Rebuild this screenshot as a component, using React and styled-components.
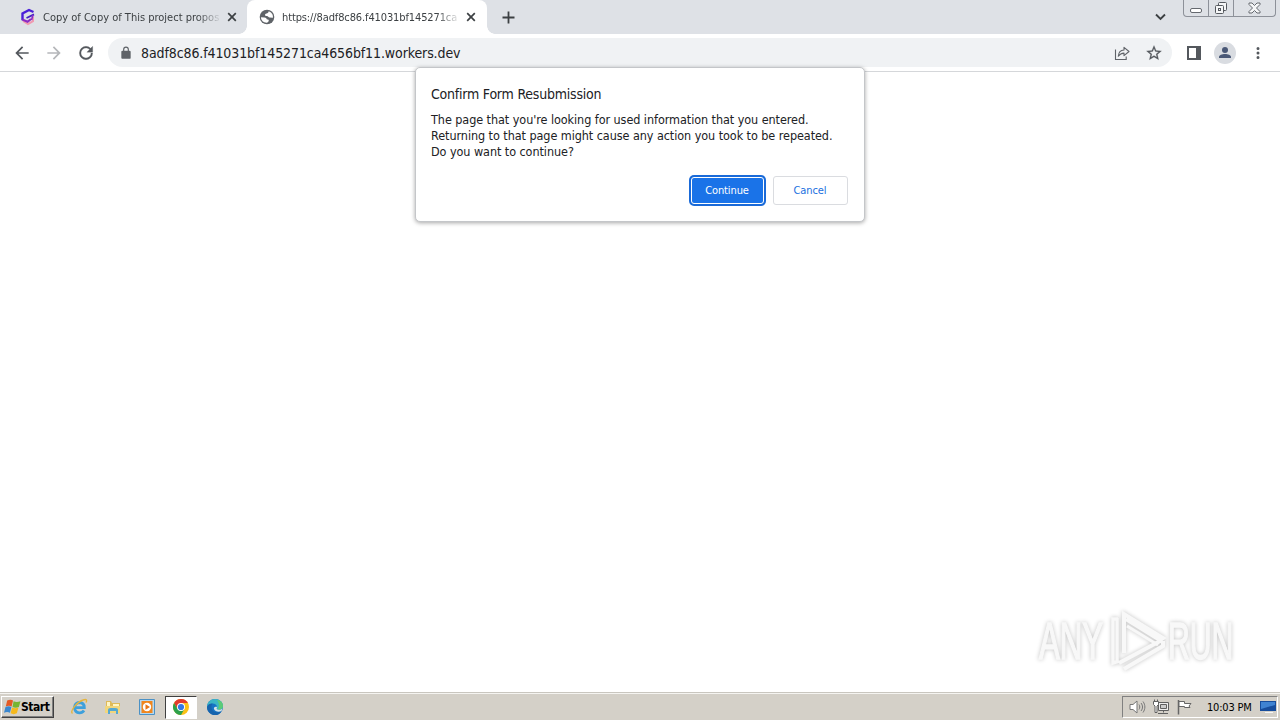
import React from 'react';
import styled, { createGlobalStyle } from 'styled-components';

const GlobalStyle = createGlobalStyle`
  * { box-sizing: border-box; }
  body {
    margin: 0;
    overflow: hidden;
    background: #fff;
    font-family: "DejaVu Sans Condensed", "DejaVu Sans", "Noto Sans", sans-serif;
    font-stretch: condensed;
  }
  svg { display: block; flex: none; }
`;

const Desktop = styled.div`
  position: relative;
  width: 1280px;
  height: 720px;
  display: flex;
  flex-direction: column;
  overflow: hidden;
`;

const TabStrip = styled.div`
  display: flex;
  height: 34px;
  flex: none;
  background: #dee1e6;
`;

const Tab = styled.div`
  position: relative;
  display: flex;
  align-items: center;
  width: ${p => (p.$active ? 240 : 247)}px;
  height: 34px;
  padding: 0 10px 0 ${p => (p.$active ? 12 : 20)}px;
  background: ${p => (p.$active ? '#fff' : 'transparent')};
  border-radius: 8px 8px 0 0;
  color: #3c4043;

  &::before,
  &::after {
    content: '';
    display: ${p => (p.$active ? 'block' : 'none')};
    position: absolute;
    bottom: 0;
    width: 8px;
    height: 8px;
  }
  &::before {
    left: -8px;
    background: radial-gradient(circle at 0 0, transparent 7.5px, #fff 8px);
  }
  &::after {
    right: -8px;
    background: radial-gradient(circle at 100% 0, transparent 7.5px, #fff 8px);
  }
`;

const TabTitle = styled.span`
  width: 176px;
  margin: 1px 8px 0 7px;
  white-space: nowrap;
  font-size: 11px;
  line-height: 16px;
  letter-spacing: ${p => p.$spacing || 0}px;
  mask-image: linear-gradient(to right, #000 154px, transparent 179px);
`;

const NewTab = styled.div`
  display: flex;
  align-items: center;
  padding-left: 15px;
`;

const WindowControls = styled.div`
  display: flex;
  align-items: flex-start;
  margin-left: auto;
`;

const TabSearch = styled.div`
  padding: 13px 17px 0 0;
`;

const ControlGroup = styled.div`
  display: flex;
  height: 17px;
  width: 93px;
  margin-right: 4px;
  border: 1px solid #8d9199;
  border-top: 0;
  border-radius: 0 0 4px 4px;
`;

const ControlButton = styled.div`
  display: flex;
  align-items: center;
  justify-content: center;
  width: ${p => p.$width}px;
  height: 16px;
  border-right: ${p => (p.$last ? '0' : '1px solid #8d9199')};
`;

const Toolbar = styled.div`
  display: flex;
  align-items: center;
  height: 38px;
  flex: none;
  padding-left: 12px;
  background: #fff;
  border-bottom: 1px solid #d5d7da;
`;

const NavButtons = styled.div`
  display: flex;
  gap: 12px;
  width: 96px;
`;

const AddressBar = styled.div`
  display: flex;
  align-items: center;
  width: 1064px;
  height: 29px;
  padding: 0 9px 0 11px;
  border-radius: 15px;
  background: #f0f2f4;
`;

const Url = styled.span`
  flex: 1;
  margin-left: 8px;
  font-size: 14px;
  line-height: 20px;
  letter-spacing: -0.1px;
  color: #202124;
`;

const AddressActions = styled.div`
  display: flex;
  align-items: center;
  gap: 15px;
`;

const ToolbarActions = styled.div`
  display: flex;
  align-items: center;
  gap: 13px;
  margin-left: 15px;
`;

const Avatar = styled.div`
  width: 22px;
  height: 22px;
  border-radius: 50%;
  background: #d9dce1;
`;

const Page = styled.main`
  flex: 1;
  display: flex;
  align-items: flex-end;
  justify-content: flex-end;
  padding: 0 41px 20px 0;
  background: #fff;
`;

const Dialog = styled.div`
  position: absolute;
  left: 415px;
  top: 67px;
  width: 450px;
  height: 155px;
  padding: 17px 16px 16px 15px;
  border: 1px solid #c4c6c9;
  border-radius: 5px;
  background: #fff;
  box-shadow: 0 1px 4px rgba(0, 0, 0, 0.35);
  color: #202124;
`;

const DialogTitle = styled.h1`
  margin: 0 0 9px;
  font-size: 14px;
  font-weight: 400;
  line-height: 18px;
  letter-spacing: -0.22px;
`;

const DialogLine = styled.div`
  font-size: 12.5px;
  line-height: 16px;
  white-space: nowrap;
  letter-spacing: -0.06px;
`;

const DialogActions = styled.div`
  display: flex;
  justify-content: flex-end;
  gap: 9px;
  margin-top: 16px;
`;

const Button = styled.button`
  width: ${p => (p.$primary ? 73 : 75)}px;
  height: ${p => (p.$primary ? 27 : 29)}px;
  margin: ${p => (p.$primary ? '1px' : '0')} 0 0;
  padding: 0 1px 1px 0;
  border: 1px solid ${p => (p.$primary ? '#fff' : '#dadce0')};
  border-radius: 3px;
  background: ${p => (p.$primary ? '#1a73e8' : '#fff')};
  box-shadow: ${p => (p.$primary ? '0 0 0 2px #1a6ad8' : 'none')};
  color: ${p => (p.$primary ? '#fff' : '#1a6fe0')};
  font-family: inherit;
  font-stretch: inherit;
  font-size: 11px;
  letter-spacing: -0.1px;
`;

const Watermark = styled.div`
  display: flex;
  align-items: center;
  filter: drop-shadow(0 0 2px rgba(0, 0, 0, 0.24));
`;

const WatermarkText = styled.span`
  width: ${p => p.$width}px;
  height: 54px;
  font-family: "Liberation Sans", Arial, sans-serif;
  font-stretch: normal;
  font-size: 52px;
  line-height: 54px;
  color: #f8f8f8;
  -webkit-text-stroke: 1.5px #f8f8f8;
  transform: scaleX(${p => p.$scale});
  transform-origin: left;
`;

const Taskbar = styled.footer`
  display: flex;
  align-items: center;
  height: 28px;
  flex: none;
  padding: 1px 2px 0 1px;
  border-top: 1px solid #c9c6bf;
  background: #d4d0c8;
  box-shadow: inset 0 1px #f5f4f1;
`;

const StartButton = styled.div`
  display: flex;
  align-items: center;
  width: 53px;
  height: 22px;
  padding-left: 2px;
  border: 1px solid;
  border-color: #fff #404040 #404040 #fff;
  box-shadow: inset -1px -1px #808080;
  color: #000;
  font-size: 12px;
  font-weight: 700;
  letter-spacing: -0.45px;
`;

const QuickLaunch = styled.div`
  display: flex;
  align-items: center;
  margin-left: 8px;
`;

const TaskItem = styled.div`
  display: flex;
  align-items: center;
  justify-content: center;
  width: ${p => (p.$active ? 32 : 34)}px;
  height: 23px;
  margin: 0 ${p => (p.$active ? 1 : 0)}px;
  border: 1px solid;
  border-color: ${p => (p.$active ? '#404040 #fff #fff #404040' : 'transparent')};
  background: ${p => (p.$active ? '#fff' : 'transparent')};
`;

const Tray = styled.div`
  display: flex;
  align-items: center;
  width: 156px;
  height: 22px;
  margin-left: auto;
  padding: 0 1px 0 6px;
  border: 1px solid;
  border-color: #808080 #fff #fff #808080;
  gap: 7px;
`;

const Clock = styled.span`
  flex: 1;
  margin-left: 7px;
  font-size: 11px;
  letter-spacing: -0.2px;
  white-space: nowrap;
  color: #000;
`;

const CloseIcon = () => (
  <svg width="10" height="10" viewBox="0 0 10 10" stroke="#3c4043" strokeWidth="1.7">
    <path d="M1.200 1.200l7.600 7.600M8.800 1.200L1.200 8.800" />
  </svg>
);

const ProjectIcon = () => (
  <svg width="16" height="18" viewBox="0 0 16 18" fill="none">
    <path d="M13 9v4.200L8 16l-5-3" stroke="#f09ab0" strokeWidth="2" />
    <path d="M13.500 4L9 2 2.500 5.500v6.700" stroke="#4a1fd8" strokeWidth="2.400" />
    <path d="M2.300 11.500l5.300 2.300L11 11" stroke="#8b2bc4" strokeWidth="2.200" />
    <path d="M6.500 10l7.500-3.600" stroke="#4420c4" strokeWidth="1.800" />
    <path d="M13 7l-1.500 5" stroke="#8b2bc4" strokeWidth="1.600" />
  </svg>
);

const GlobeIcon = () => (
  <svg width="16" height="16" viewBox="0 0 16 16">
    <circle cx="8" cy="8" r="7.300" fill="#5f6368" />
    <path d="M2 8.300l3.500.200c1.400.100 2 .700 2.200 1.800l1.900.400c.600 1.200-.300 2.700-1.800 3C4.600 13.800 2 11.500 2 8.300z" fill="#fff" />
    <path d="M9.700 2.300C9.500 3.700 8.700 4.200 7.500 4.500c-1 .200-1.500.700-1.500 1.500s.700 1 1.900 1c1.300 0 1.500 1.500 2.700 1.600l3.300.200c.400-3.100-1.400-5.600-4.200-6.500z" fill="#fff" />
  </svg>
);

const MATERIAL = {
  back: 'M20 11H7.83l5.59-5.59L12 4l-8 8 8 8 1.41-1.41L7.83 13H20v-2z',
  forward: 'M12 4l-1.41 1.41L16.17 11H4v2h12.17l-5.58 5.59L12 20l8-8z',
  reload: 'M17.65 6.35A7.96 7.96 0 0012 4a8 8 0 108 8h-2a6 6 0 11-6-6c1.66 0 3.14.69 4.22 1.78L13 11h7V4l-2.35 2.35z',
  lock: 'M18 8h-1V6A5 5 0 007 6v2H6a2 2 0 00-2 2v10c0 1.1.9 2 2 2h12a2 2 0 002-2V10a2 2 0 00-2-2zM9 6a3 3 0 016 0v2H9V6z',
  star: 'M22 9.24l-7.19-.62L12 2 9.19 8.63 2 9.24l5.46 4.73L5.82 21 12 17.27 18.18 21l-1.63-7.03L22 9.24zM12 15.4l-3.76 2.27 1-4.28-3.32-2.88 4.38-.38L12 6.1l1.71 4.04 4.38.38-3.32 2.88 1 4.28L12 15.4z',
  more: 'M12 8a2 2 0 100-4 2 2 0 000 4zm0 2a2 2 0 100 4 2 2 0 000-4zm0 6a2 2 0 100 4 2 2 0 000-4z',
};

const Icon = ({ name, size = 20, color = '#54585d', weight = 0 }) => (
  <svg width={size} height={size} viewBox="0 0 24 24" fill={color} stroke={color} strokeWidth={weight}>
    <path d={MATERIAL[name]} />
  </svg>
);

const ShareIcon = () => (
  <svg width="16" height="16" viewBox="0 0 16 16" fill="none" stroke="#5f6368" strokeWidth="1.1">
    <path d="M1.500 4.500v10h10.700V11.500" />
    <path d="M4.300 11.200c.3-4 2.200-6 5.700-6.200V2.300l5 4.200-5 4.200V8.100c-2.500.100-4.200 1-5.700 3.100z" strokeLinejoin="round" />
  </svg>
);

const PlayLogo = () => (
  <svg width="60" height="62" viewBox="0 0 60 62" fill="none" stroke="#f8f8f8" strokeWidth="4">
    <path d="M16 43V4l39 24-3 2-34-21" />
    <path d="M10 9H5v44l6-2M9 8v43" strokeWidth="3.500" />
    <path d="M11 53l43-23M16 59l39-23v-5" />
    <path d="M19 16l31 19" strokeWidth="3" />
  </svg>
);

const StartFlag = () => (
  <svg width="17" height="17" viewBox="0 0 16 16">
    <path d="M3 1.500c2-1 4-1 5.500 0L7.200 7C5.500 6 3.700 6 1.700 7z" fill="#e45a24" />
    <path d="M9 2c2 1 4 1 6.500 0L14 7.500c-2 1-4 1-6 0z" fill="#76b532" />
    <path d="M1.400 7.500c2-1 4-1 5.600 0l-1.400 5.500c-1.700-1-3.600-1-5.600 0z" fill="#3a87cf" />
    <path d="M7.600 8c2 1 4 1 6 0l-1.500 5.500c-2 1-4 1-5.900 0z" fill="#f5b91d" />
  </svg>
);

const ExplorerIcon = () => (
  <svg width="18" height="18" viewBox="0 0 18 18" fill="none">
    <path d="M14 12.500A5.200 5.200 0 119.300 4.500c3.200 0 5 2.100 5 5.200H5" stroke="#3da0dc" strokeWidth="2.800" />
    <path d="M2.500 15.500C-.500 13 7 4 13 2c4-1.500 4 .500 3 2.500" stroke="#e5b43c" strokeWidth="1.400" />
  </svg>
);

const FolderIcon = () => (
  <svg width="18" height="18" viewBox="0 0 18 18">
    <path d="M2 3h5l1 2h8v10H2z" fill="#dfba58" />
    <path d="M3 4h3v4H3zM9 6h6v3H9z" fill="#fff5c4" />
    <path d="M1 8h15v7H1z" fill="#f1d67c" />
    <path d="M4 16v-4c0-2 2-2 5-2s5 0 5 2v4h-2v-3H6v3z" fill="#55a8d2" />
  </svg>
);

const MediaIcon = () => (
  <svg width="16" height="16" viewBox="0 0 16 16">
    <path d="M.500.500h15v15H.500z" fill="#b6d8ef" stroke="#4b91c5" />
    <path d="M2.500 2h11v12h-11z" fill="#f0861d" />
    <circle cx="8" cy="8" r="4.200" fill="#fff" />
    <path d="M6.500 5.200L11 8l-4.500 2.800z" fill="#e77516" />
  </svg>
);

const ChromeIcon = () => (
  <svg width="16" height="16" viewBox="0 0 16 16">
    <circle cx="8" cy="8" r="8" fill="#fbc116" />
    <path d="M1.070 4A8 8 0 0114.930 4H8L4.540 10z" fill="#e33b2e" />
    <path d="M1.070 4A8 8 0 008 16l3.460-6H4.540z" fill="#2da14c" />
    <circle cx="8" cy="8" r="4" fill="#fff" />
    <circle cx="8" cy="8" r="3.100" fill="#3478e5" />
  </svg>
);

const EdgeIcon = () => (
  <svg width="16" height="16" viewBox="0 0 16 16">
    <circle cx="8" cy="8" r="8" fill="#1673c5" />
    <path d="M0 8C0 3 4 0 8 0c5 0 8 3.500 8 7 0 3-3 4-5.500 3.500C9 10 10 9 10 8c0-2-2-3.500-4.500-3.500C3 4.500 1 6 0 8z" fill="#3bb5c5" />
    <path d="M10 1c4 .500 6 3 6 6 0 3-3 4-5.500 3.500C13 7 12 4 10 1z" fill="#5ccb78" />
    <path d="M0 8C.500 5.500 3 4.500 5.500 4.500 3 8 5 12 8 13c2.500.800 4.500 0 6.500-1C12 17 7 17 4 15 1 13 0 11 0 8z" fill="#1764ad" />
    <path d="M10 8c0 1-1 2 .500 2.500 2 .600 4 .200 5-1.200l-1 2.700c-3 1.500-6.500.500-7.500-2C6.400 8.500 8 7 10 8z" fill="#d4e3e7" />
  </svg>
);

const SpeakerIcon = () => (
  <svg width="17" height="16" viewBox="0 0 17 16" fill="none" stroke="#777" strokeWidth="1">
    <path d="M1 5.500h3L8 2v12l-4-3.500H1z" fill="#fff" />
    <path d="M10 5.500c1 1.500 1 3.500 0 5M12 4c2 2.500 2 5.500 0 8M14 2.500c2.500 3.500 2.500 7.500 0 11" />
  </svg>
);

const NetworkIcon = () => (
  <svg width="16" height="16" viewBox="0 0 16 16" fill="none" stroke="#606060">
    <path d="M5.500 3.500h10v8h-10z" fill="#eee" />
    <path d="M7.500 5.500h6v4h-6z" fill="#ccc" />
    <path d="M10.500 11.500v2M5 14.500h10" />
    <path d="M.500 2.500h5v3l-1.500 1.500v6.500h-2V7L.500 5.500zM1.500.500v2M4.500.500v2" fill="#fff" />
  </svg>
);

const FlagIcon = () => (
  <svg width="17" height="16" viewBox="0 0 17 16" stroke="#666" fill="#fff">
    <path d="M2.500 1v14.500" strokeWidth="1.500" />
    <path d="M3 2.500h5.500v2h6.500l-2 2.500 1 1.500H8.500v-1H3z" />
  </svg>
);

const MonitorIcon = () => (
  <svg width="16" height="16" viewBox="0 0 16 16">
    <path d="M0 2h16v10H0z" fill="#174d9c" />
    <path d="M1 3h14v3L1 10z" fill="#3f83d2" />
    <path d="M5 13h8v1H5z" fill="#f5f5f5" />
  </svg>
);

const App = () => {
  return (
    <>
      <GlobalStyle />
      <Desktop>
        <TabStrip>
          <Tab>
            <ProjectIcon />
            <TabTitle $spacing={0}>Copy of Copy of This project propos</TabTitle>
            <CloseIcon />
          </Tab>
          <Tab $active>
            <GlobeIcon />
            <TabTitle $spacing={-0.12}>https://8adf8c86.f41031bf145271ca</TabTitle>
            <CloseIcon />
          </Tab>
          <NewTab>
            <svg width="13" height="13" viewBox="0 0 13 13" stroke="#3c4043" strokeWidth="1.8">
              <path d="M6.500.500v12M.500 6.500h12" />
            </svg>
          </NewTab>
          <WindowControls>
            <TabSearch>
              <svg width="11" height="8" viewBox="0 0 11 8" fill="none" stroke="#3c4043" strokeWidth="1.9">
                <path d="M1 1.500l4.500 4.500L10 1.500" />
              </svg>
            </TabSearch>
            <ControlGroup>
              <ControlButton $width={25}>
                <svg width="12" height="16" viewBox="0 0 12 16" fill="#fff" stroke="#65696f">
                  <rect x=".5" y="8.500" width="11" height="4" rx="1.500" />
                </svg>
              </ControlButton>
              <ControlButton $width={25}>
                <svg width="14" height="14" viewBox="0 0 14 14" fill="#f5f6f7" stroke="#55595f">
                  <rect x="4.500" y="1.500" width="8" height="8" rx="1" />
                  <rect x="1.500" y="4.500" width="8" height="8" rx="1" />
                  <rect x="4.500" y="7.500" width="2" height="2" />
                </svg>
              </ControlButton>
              <ControlButton $width={41} $last>
                <svg width="13" height="12" viewBox="0 0 13 12" fill="#f5f6f7" stroke="#65696f">
                  <path d="M1 1h3l2.500 2.500L9 1h3v1.500L8.500 6 12 9.500V11H9L6.500 8.500 4 11H1V9.500L4.500 6 1 2.500z" />
                </svg>
              </ControlButton>
            </ControlGroup>
          </WindowControls>
        </TabStrip>

        <Toolbar>
          <NavButtons>
            <Icon name="back" />
            <Icon name="forward" color="#b5b7ba" />
            <Icon name="reload" weight={0.3} />
          </NavButtons>
          <AddressBar>
            <Icon name="lock" size={14} color="#5f6368" />
            <Url>8adf8c86.f41031bf145271ca4656bf11.workers.dev</Url>
            <AddressActions>
              <ShareIcon />
              <Icon name="star" size={18} weight={0.3} />
            </AddressActions>
          </AddressBar>
          <ToolbarActions>
            <svg width="14" height="14" viewBox="0 0 14 14" fill="none" stroke="#54585d" strokeWidth="2">
              <path d="M1 1h12v12H1z" />
              <path d="M11.500 0v14" strokeWidth="5" />
            </svg>
            <Avatar>
              <svg width="22" height="22" viewBox="0 0 22 22" fill="#4a5876">
                <circle cx="11" cy="8" r="3" />
                <path d="M5 16v-1c0-2 3-3 6-3s6 1 6 3v1z" />
              </svg>
            </Avatar>
            <Icon name="more" size={18} />
          </ToolbarActions>
        </Toolbar>

        <Page>
          <Watermark>
            <WatermarkText $width={69} $scale={0.6}>ANY</WatermarkText>
            <PlayLogo />
            <WatermarkText $width={71} $scale={0.58}>RUN</WatermarkText>
          </Watermark>
        </Page>

        <Taskbar>
          <StartButton>
            <StartFlag />
            Start
          </StartButton>
          <QuickLaunch>
            <TaskItem><ExplorerIcon /></TaskItem>
            <TaskItem><FolderIcon /></TaskItem>
            <TaskItem><MediaIcon /></TaskItem>
            <TaskItem $active><ChromeIcon /></TaskItem>
            <TaskItem><EdgeIcon /></TaskItem>
          </QuickLaunch>
          <Tray>
            <SpeakerIcon />
            <NetworkIcon />
            <FlagIcon />
            <Clock>10:03 PM</Clock>
            <MonitorIcon />
          </Tray>
        </Taskbar>

        <Dialog>
          <DialogTitle>Confirm Form Resubmission</DialogTitle>
          <DialogLine>The page that you're looking for used information that you entered.</DialogLine>
          <DialogLine>Returning to that page might cause any action you took to be repeated.</DialogLine>
          <DialogLine>Do you want to continue?</DialogLine>
          <DialogActions>
            <Button $primary>Continue</Button>
            <Button>Cancel</Button>
          </DialogActions>
        </Dialog>
      </Desktop>
    </>
  );
};

export default App;
